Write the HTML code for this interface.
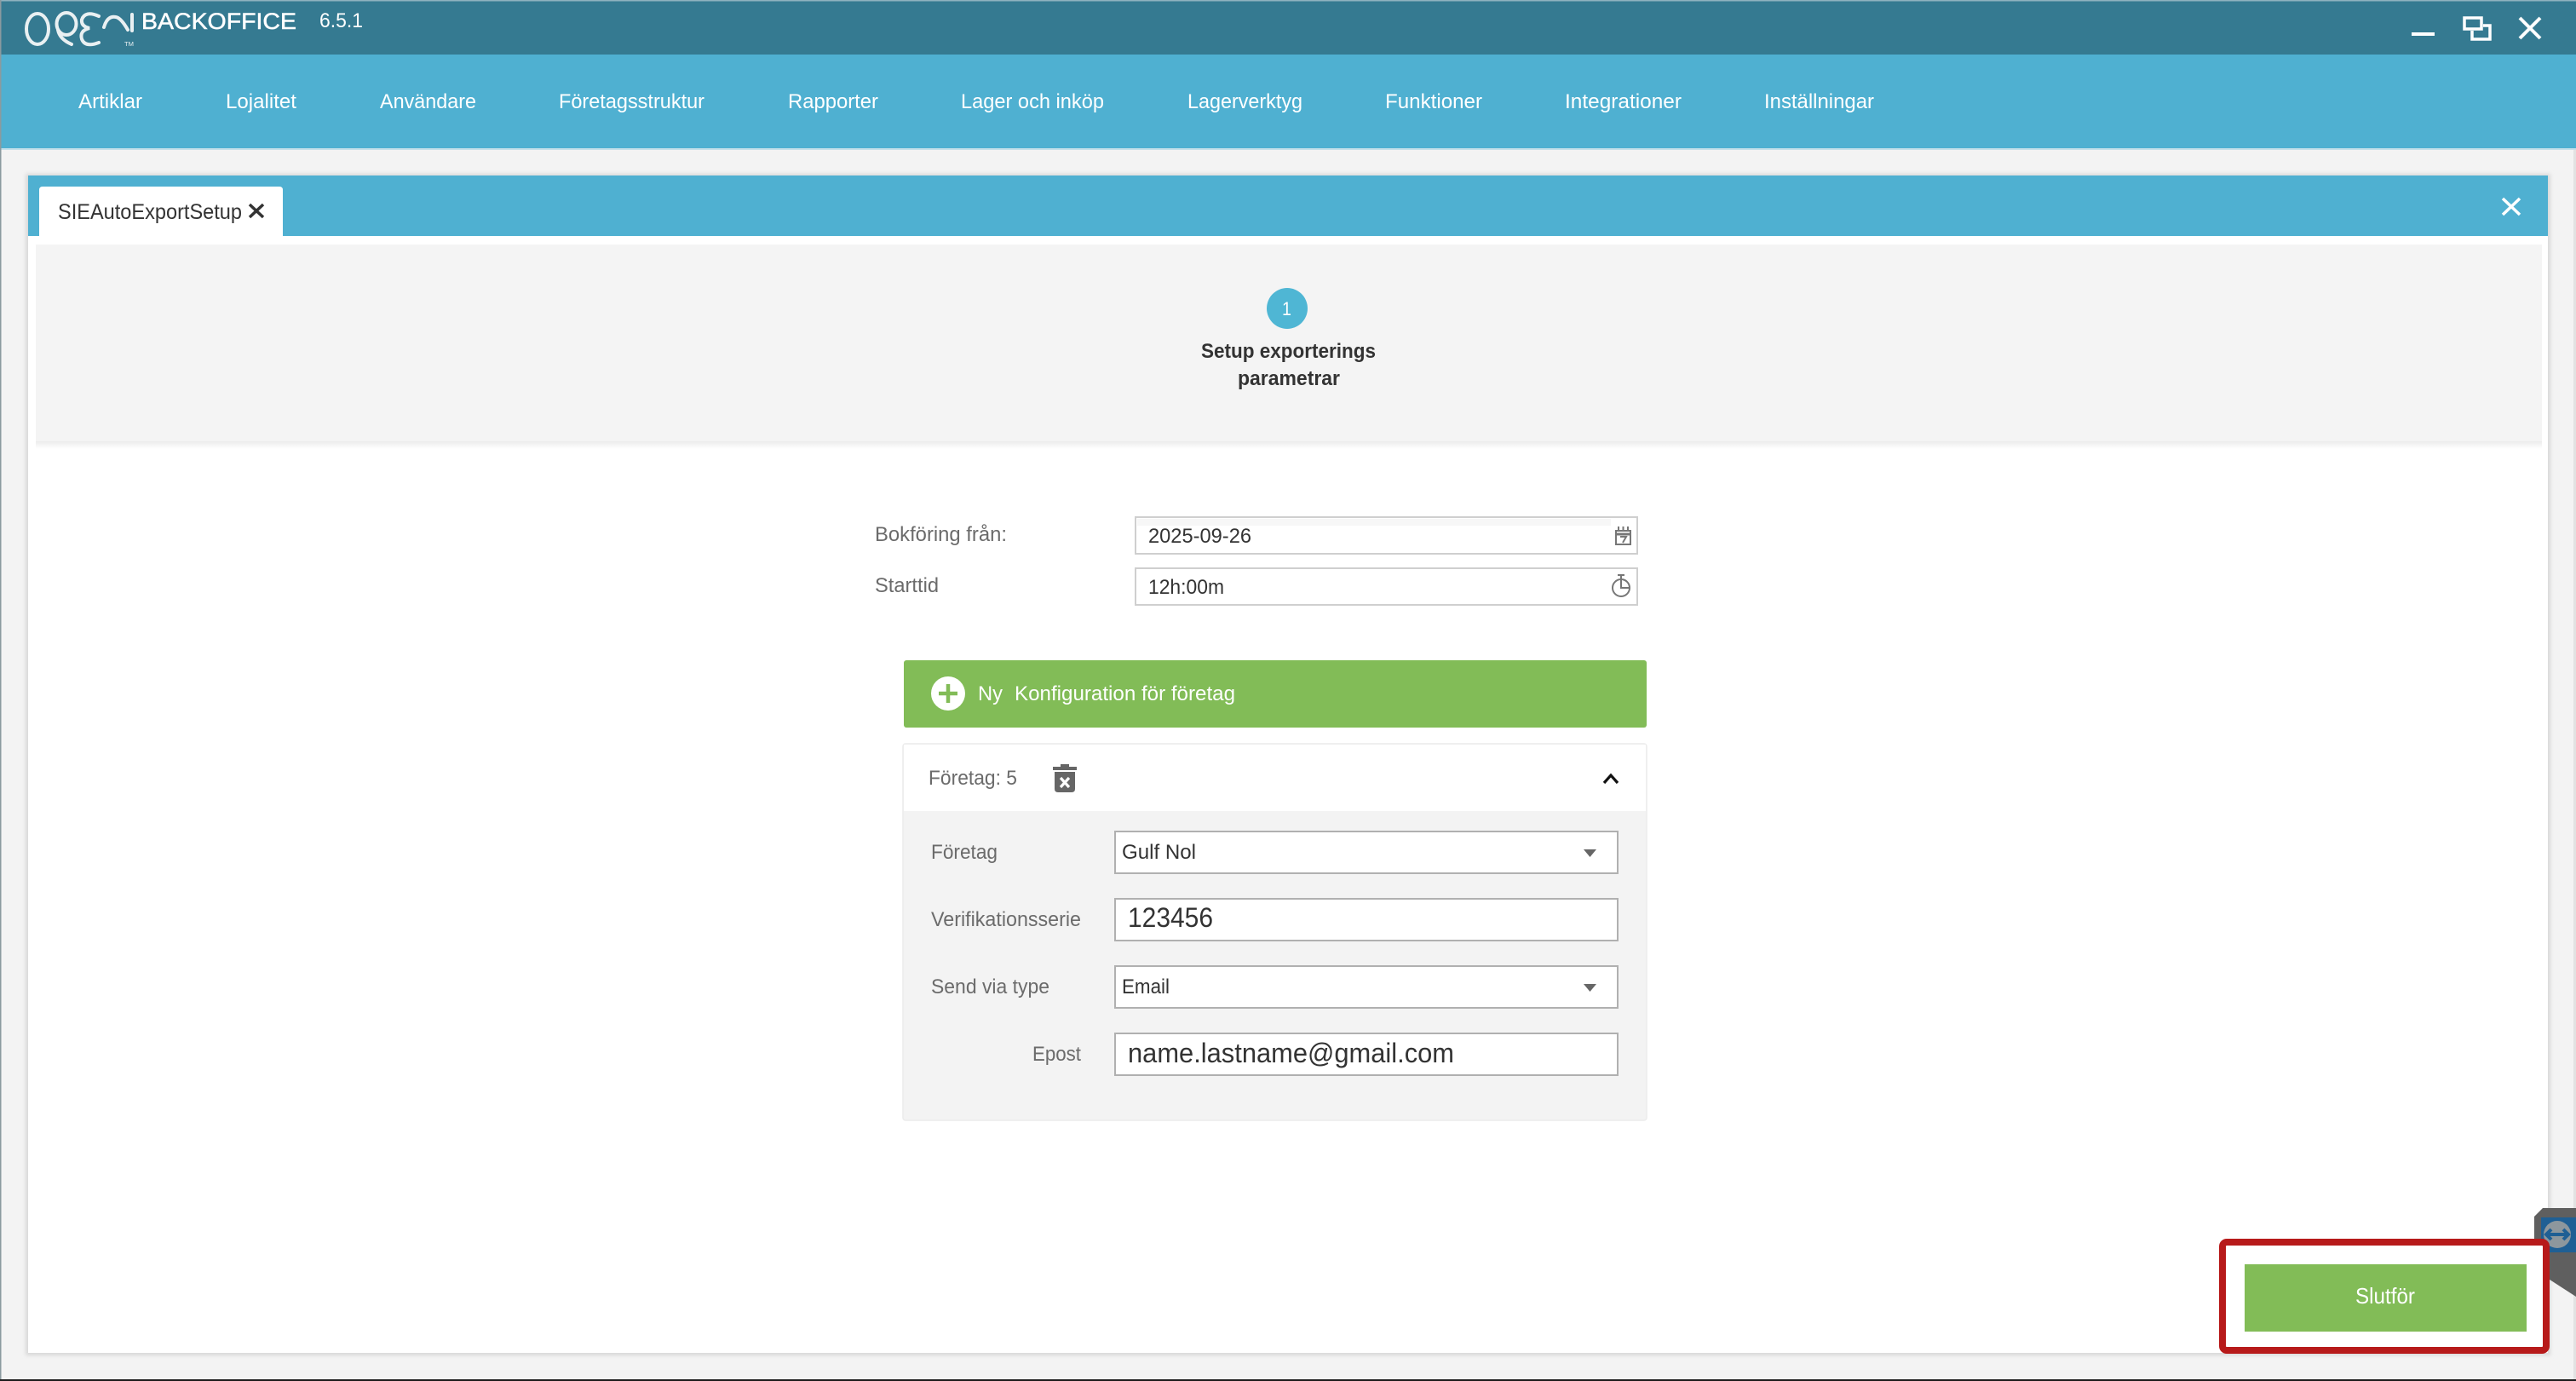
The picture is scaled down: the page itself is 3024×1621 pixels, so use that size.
<!DOCTYPE html>
<html lang="sv">
<head>
<meta charset="utf-8">
<title>Backoffice</title>
<style>
html,body{margin:0;padding:0;background:#f3f3f3;width:3024px;height:1621px;overflow:hidden}
svg{display:block}
text{font-family:"Liberation Sans",sans-serif}
.nav{font-size:24px;fill:#fff}
.lab{font-size:24px;fill:#6b6b6b}
.val{font-size:24px;fill:#333}
</style>
</head>
<body>
<svg width="3024" height="1621" viewBox="0 0 3024 1621" xmlns="http://www.w3.org/2000/svg">
<defs>
<linearGradient id="sh" x1="0" y1="0" x2="0" y2="1"><stop offset="0" stop-color="#ececec"/><stop offset="1" stop-color="#fff"/></linearGradient>
<filter id="soft" x="-2%" y="-2%" width="104%" height="104%"><feGaussianBlur stdDeviation="2"/></filter>
</defs>
<!-- window -->
<rect width="3024" height="1621" fill="#f3f3f3"/>
<rect width="3024" height="64" fill="#357a91"/>
<rect y="0" width="3024" height="1.5" fill="#8fb2bf"/>
<rect y="64" width="3024" height="110" fill="#4fb0d1"/>
<rect y="174" width="3024" height="2" fill="#c4e0ea"/>
<rect x="0" y="0" width="1.5" height="1621" fill="#8a9a9f"/>
<rect x="3021" y="176" width="3" height="1445" fill="#e2e2e2"/>
<rect y="1619" width="3024" height="2" fill="#1c1c1c"/>

<!-- logo -->
<g fill="none" stroke="#e9f0f2" stroke-width="4" stroke-linecap="round">
<ellipse cx="44" cy="34" rx="13" ry="18"/>
<ellipse cx="78" cy="28" rx="11.5" ry="13"/>
<path d="M68 35Q70 46 84 52"/>
<path d="M116 19Q100 12 96 23Q95 31 105 33Q93 36 96 46Q100 56 116 50"/>
<path d="M122 32Q126 18 136 20Q142 21 150 35"/>
<path d="M155 17V36"/>
</g>
<text x="146" y="54" font-size="7" fill="#e9f0f2" textLength="11" lengthAdjust="spacingAndGlyphs">TM</text>
<text x="166" y="34" font-size="27" fill="#fff" stroke="#fff" stroke-width="0.5" textLength="182" lengthAdjust="spacingAndGlyphs">BACKOFFICE</text>
<text x="375" y="32" font-size="24" fill="#fff" textLength="51" lengthAdjust="spacingAndGlyphs">6.5.1</text>

<!-- window controls -->
<g fill="none" stroke="#fff" stroke-width="4">
<path d="M2831 40H2858"/>
<rect x="2893" y="21" width="20" height="13" stroke-width="3.5"/>
<path d="M2915 30H2923V46H2902V36" stroke-width="3.5"/>
<path d="M2958 21L2982 45M2982 21L2958 45"/>
</g>

<!-- nav -->
<g class="nav">
<text class="nav" x="92" y="127" textLength="75" lengthAdjust="spacingAndGlyphs">Artiklar</text>
<text class="nav" x="265" y="127" textLength="83" lengthAdjust="spacingAndGlyphs">Lojalitet</text>
<text class="nav" x="446" y="127" textLength="113" lengthAdjust="spacingAndGlyphs">Användare</text>
<text class="nav" x="656" y="127" textLength="171" lengthAdjust="spacingAndGlyphs">Företagsstruktur</text>
<text class="nav" x="925" y="127" textLength="106" lengthAdjust="spacingAndGlyphs">Rapporter</text>
<text class="nav" x="1128" y="127" textLength="168" lengthAdjust="spacingAndGlyphs">Lager och inköp</text>
<text class="nav" x="1394" y="127" textLength="135" lengthAdjust="spacingAndGlyphs">Lagerverktyg</text>
<text class="nav" x="1626" y="127" textLength="114" lengthAdjust="spacingAndGlyphs">Funktioner</text>
<text class="nav" x="1837" y="127" textLength="137" lengthAdjust="spacingAndGlyphs">Integrationer</text>
<text class="nav" x="2071" y="127" textLength="129" lengthAdjust="spacingAndGlyphs">Inställningar</text>
</g>

<!-- panel -->
<rect x="30" y="204" width="2964" height="1387" fill="#d9d9d9" filter="url(#soft)"/>
<rect x="33" y="206" width="2958" height="1382" fill="#fff"/>
<rect x="33" y="206" width="2958" height="71" fill="#4fb0d1"/>
<path d="M2938 233L2958 252M2958 233L2938 252" fill="none" stroke="#fff" stroke-width="3.5"/>
<path d="M46 277V223Q46 219 50 219H328Q332 219 332 223V277Z" fill="#fff"/>
<text x="68" y="257" font-size="25" fill="#333" textLength="216" lengthAdjust="spacingAndGlyphs">SIEAutoExportSetup</text>
<path d="M293 240L309 255M309 240L293 255" stroke="#333" stroke-width="3.5" fill="none"/>

<!-- step -->
<rect x="42" y="287" width="2942" height="231" fill="#f4f4f4"/>
<rect x="42" y="518" width="2942" height="9" fill="url(#sh)"/>
<circle cx="1511" cy="362" r="24" fill="#4fb6d4"/>
<text x="1505" y="370" font-size="22" fill="#fff" textLength="11" lengthAdjust="spacingAndGlyphs">1</text>
<text x="1410" y="420" font-size="24" font-weight="700" fill="#333" textLength="205" lengthAdjust="spacingAndGlyphs">Setup exporterings</text>
<text x="1453" y="452" font-size="24" font-weight="700" fill="#333" textLength="120" lengthAdjust="spacingAndGlyphs">parametrar</text>

<!-- top form -->
<text class="lab" x="1027" y="635" textLength="155" lengthAdjust="spacingAndGlyphs">Bokföring från:</text>
<text class="lab" x="1027" y="695" textLength="75" lengthAdjust="spacingAndGlyphs">Starttid</text>
<rect x="1333" y="607" width="589" height="43" fill="#fff" stroke="#cfcfcf" stroke-width="2"/>
<rect x="1333" y="667" width="589" height="43" fill="#fff" stroke="#cfcfcf" stroke-width="2"/>
<rect x="1335" y="609" width="556" height="8" fill="#f7f7f7"/>
<text class="val" x="1348" y="637" textLength="121" lengthAdjust="spacingAndGlyphs">2025-09-26</text>
<text class="val" x="1348" y="697" textLength="89" lengthAdjust="spacingAndGlyphs">12h:00m</text>
<!-- calendar -->
<g fill="none" stroke="#777" stroke-width="2">
<rect x="1897" y="623" width="17" height="16"/>
<path d="M1897 627H1914" stroke-width="3"/>
<path d="M1900 618V624M1905.500 618V624M1911 618V624"/>
<path d="M1902 630H1909L1905 637" stroke-width="2"/>
</g>
<!-- stopwatch -->
<g fill="none" stroke="#777" stroke-width="2">
<circle cx="1903" cy="690" r="10"/>
<path d="M1903 675V690H1913"/>
<path d="M1899 675H1907"/>
</g>

<!-- green bar -->
<rect x="1061" y="775" width="872" height="79" rx="3" fill="#82bc57"/>
<circle cx="1113" cy="814" r="20" fill="#fff"/>
<path d="M1113 803V825M1102 814H1124" stroke="#82bc57" stroke-width="4.5"/>
<text x="1148" y="822" font-size="24" fill="#fff" textLength="29" lengthAdjust="spacingAndGlyphs">Ny</text>
<text x="1191" y="822" font-size="24" fill="#fff" textLength="259" lengthAdjust="spacingAndGlyphs">Konfiguration för företag</text>

<!-- card -->
<rect x="1060" y="873" width="873" height="442" rx="3" fill="#f3f3f3" stroke="#ececec" stroke-width="1.5"/>
<path d="M1061 874H1932V952H1061Z" fill="#fff"/>
<text class="lab" x="1090" y="921" textLength="104" lengthAdjust="spacingAndGlyphs">Företag: 5</text>
<!-- trash -->
<path d="M1236 900H1264V904H1236ZM1245 897H1255V900H1245Z" fill="#666"/>
<path d="M1238 906H1262V926Q1262 930 1258 930H1242Q1238 930 1238 926Z" fill="#666"/>
<path d="M1245 913L1255 924M1255 913L1245 924" stroke="#fff" stroke-width="3.2"/>
<!-- chevron -->
<path d="M1883 919L1891 910L1899 919" fill="none" stroke="#111" stroke-width="3.2"/>

<text class="lab" x="1093" y="1008" textLength="78" lengthAdjust="spacingAndGlyphs">Företag</text>
<text class="lab" x="1093" y="1087" textLength="176" lengthAdjust="spacingAndGlyphs">Verifikationsserie</text>
<text class="lab" x="1093" y="1166" textLength="139" lengthAdjust="spacingAndGlyphs">Send via type</text>
<text class="lab" x="1212" y="1245" textLength="57" lengthAdjust="spacingAndGlyphs">Epost</text>

<g fill="#fff" stroke="#b0b0b0" stroke-width="2">
<rect x="1309" y="976" width="590" height="49"/>
<rect x="1309" y="1055" width="590" height="49"/>
<rect x="1309" y="1134" width="590" height="49"/>
<rect x="1309" y="1213" width="590" height="49"/>
</g>
<text class="val" x="1317" y="1008" textLength="87" lengthAdjust="spacingAndGlyphs">Gulf Nol</text>
<text x="1324" y="1088" font-size="32" fill="#333" textLength="100" lengthAdjust="spacingAndGlyphs">123456</text>
<text class="val" x="1317" y="1166" textLength="56" lengthAdjust="spacingAndGlyphs">Email</text>
<text x="1324" y="1247" font-size="32" fill="#333" textLength="383" lengthAdjust="spacingAndGlyphs">name.lastname@gmail.com</text>
<path d="M1859 997H1874L1866.500 1006Z" fill="#666"/>
<path d="M1859 1155H1874L1866.500 1164Z" fill="#666"/>

<!-- teamviewer tab -->
<path d="M2985 1418H3024V1522L2990 1500L2975 1490V1428Z" fill="#5f5f5f"/>
<rect x="2983" y="1429" width="41" height="41" fill="#1f5f94"/>
<circle cx="3002" cy="1449" r="16" fill="#8d979d"/>
<path d="M2990 1449H3014M2995 1443L2989 1449L2995 1455M3009 1443L3015 1449L3009 1455" fill="none" stroke="#1f5f94" stroke-width="4"/>

<!-- finish -->
<rect x="2609" y="1458" width="380" height="127" fill="#fff" stroke="none"/>
<rect x="2609" y="1458" width="380" height="127" rx="5" fill="none" stroke="#b71a1a" stroke-width="8"/>
<rect x="2635" y="1484" width="331" height="79" fill="#82bc57"/>
<text x="2765" y="1530" font-size="26" fill="#fff" textLength="70" lengthAdjust="spacingAndGlyphs">Slutför</text>
</svg>
</body>
</html>
